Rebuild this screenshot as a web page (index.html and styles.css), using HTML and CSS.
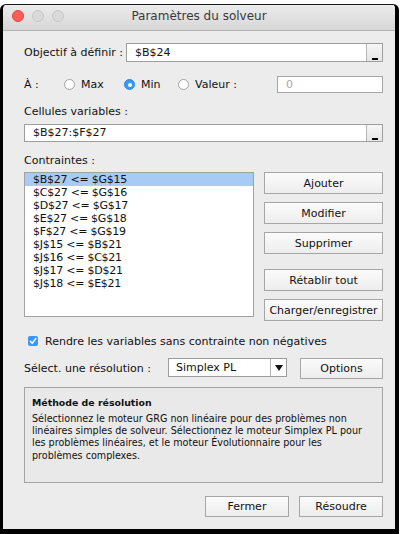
FILE: index.html
```html
<!DOCTYPE html>
<html lang="fr">
<head>
<meta charset="utf-8">
<title>Paramètres du solveur</title>
<link rel="stylesheet" href="styles.css">
</head>
<body>
<div class="window">
  <div class="titlebar">
    <div class="lights">
      <span class="light red"></span>
      <span class="light"></span>
      <span class="light"></span>
    </div>
    <div class="title">Paramètres du solveur</div>
    <div></div>
  </div>
  <div class="content">
    <div class="row obj">
      <div class="lbl obj-lbl">Objectif à définir :</div>
      <div class="refinput"><span class="reftext">$B$24</span><span class="refbtn"><span class="under"></span></span></div>
    </div>
    <div class="row to">
      <div class="lbl to-lbl">À :</div>
      <div class="opt opt-max"><span class="radio"></span><span>Max</span></div>
      <div class="opt opt-min"><span class="radio on"></span><span>Min</span></div>
      <div class="opt opt-val"><span class="radio"></span><span>Valeur :</span></div>
      <div class="valinput">0</div>
    </div>
    <div class="lbl section cells-lbl">Cellules variables :</div>
    <div class="refinput full"><span class="reftext">$B$27:$F$27</span><span class="refbtn"><span class="under"></span></span></div>
    <div class="lbl section cons-lbl">Contraintes :</div>
    <div class="constraints">
      <div class="listbox">
        <div class="item sel">$B$27 &lt;= $G$15</div>
        <div class="item">$C$27 &lt;= $G$16</div>
        <div class="item">$D$27 &lt;= $G$17</div>
        <div class="item">$E$27 &lt;= $G$18</div>
        <div class="item">$F$27 &lt;= $G$19</div>
        <div class="item">$J$15 &lt;= $B$21</div>
        <div class="item">$J$16 &lt;= $C$21</div>
        <div class="item">$J$17 &lt;= $D$21</div>
        <div class="item">$J$18 &lt;= $E$21</div>
      </div>
      <div class="btncol">
        <div class="btn">Ajouter</div>
        <div class="btn">Modifier</div>
        <div class="btn">Supprimer</div>
        <div class="btn gap">Rétablir tout</div>
        <div class="btn">Charger/enregistrer</div>
      </div>
    </div>
    <div class="row check">
      <span class="checkbox"><svg width="10" height="10" viewBox="0 0 10 10"><path d="M2.3 5.2 L4.2 7.3 L7.8 2.6" fill="none" stroke="#fff" stroke-width="1.5" stroke-linecap="round" stroke-linejoin="round"/></svg></span>
      <span>Rendre les variables sans contrainte non négatives</span>
    </div>
    <div class="row selrow">
      <div class="lbl sel-lbl">Sélect. une résolution :</div>
      <div class="select"><span class="seltext">Simplex PL</span><span class="arrow"><span class="tri"></span></span></div>
      <div class="btn opts">Options</div>
    </div>
    <div class="method">
      <div class="mtitle">Méthode de résolution</div>
      <div class="mtext">Sélectionnez le moteur GRG non linéaire pour des problèmes non<br>linéaires simples de solveur. Sélectionnez le moteur Simplex PL pour<br>les problèmes linéaires, et le moteur Évolutionnaire pour les<br>problèmes complexes.</div>
    </div>
    <div class="footer">
      <div class="btn foot">Fermer</div>
      <div class="btn foot">Résoudre</div>
    </div>
  </div>
</div>
</body>
</html>
```
FILE: styles.css
```css
* { box-sizing: border-box; }
html, body { margin: 0; padding: 0; }
body {
  background: #ffffff;
  font-family: "DejaVu Sans", "Noto Sans", sans-serif;
  font-size: 11px;
  color: #111;
  width: 402px;
  height: 534px;
  overflow: hidden;
}
.window {
  margin-top: 4px;
  width: 399px;
  height: 530px;
  border-left: 3px solid #000;
  border-right: 4px solid #000;
  border-bottom: 5px solid #000;
  border-top: 1px solid #1a1a1a;
  border-radius: 6px 6px 0 0;
  background: #ececec;
  overflow: hidden;
}
.titlebar {
  height: 26px;
  display: grid;
  grid-template-columns: 1fr auto 1fr;
  align-items: center;
  background: linear-gradient(#ececec, #d6d6d6);
  border-bottom: 1px solid #b3b3b3;
}
.lights {
  display: flex;
  gap: 8px;
  padding-left: 9px;
  padding-bottom: 3px;
}
.light {
  width: 12px;
  height: 12px;
  border-radius: 50%;
  background: #dadada;
  border: 1px solid #c6c6c6;
}
.light.red {
  background: #fc5f57;
  border-color: #e0443e;
}
.title {
  font-size: 12px;
  color: #3a3a3a;
  padding-bottom: 3px;
}
.content {
  padding: 12px 12px 0 21px;
}
.row {
  display: flex;
  align-items: center;
}
.lbl { line-height: 14px; white-space: nowrap; }
.obj { height: 19px; }
.obj-lbl { width: 102px; }
.refinput {
  flex: 1;
  height: 19px;
  background: #fff;
  border: 1px solid #9e9e9e;
  display: flex;
  align-items: stretch;
}
.refinput.full { height: 18px; margin-top: 5px; }
.reftext {
  flex: 1;
  padding-left: 8px;
  line-height: 17px;
}
.refinput.full .reftext { line-height: 16px; }
.refbtn {
  width: 16px;
  background: linear-gradient(#f6f6f6, #e6e6e6);
  border-left: 1px solid #b4b4b4;
  display: flex;
  justify-content: center;
  align-items: flex-end;
  padding-bottom: 1px;
}
.under {
  width: 6px;
  height: 2px;
  background: #000;
}
.to { height: 17px; margin-top: 14px; }
.to-lbl { width: 40px; }
.opt { display: flex; align-items: center; gap: 6px; }
.opt-max { width: 60px; }
.opt-min { width: 54px; }
.opt-val { flex: 1; }
.radio {
  width: 11px;
  height: 11px;
  border-radius: 50%;
  background: #fff;
  border: 1px solid #a2a2a2;
  display: inline-flex;
  align-items: center;
  justify-content: center;
}
.radio.on {
  background: #3a98fb;
  border-color: #2f86e6;
}
.radio.on::after {
  content: "";
  width: 4px;
  height: 4px;
  border-radius: 50%;
  background: #fff;
}
.valinput {
  width: 106px;
  height: 17px;
  background: #fff;
  border: 1px solid #a6a6a6;
  color: #a8a8a8;
  padding-left: 8px;
  line-height: 15px;
}
.cells-lbl { margin-top: 12px; }
.cons-lbl { margin-top: 12px; }
.constraints {
  display: flex;
  margin-top: 4px;
  gap: 10px;
  align-items: flex-start;
}
.listbox {
  width: 230px;
  height: 145px;
  background: #fff;
  border: 1px solid #a2a2a2;
  padding-top: 0;
  letter-spacing: -0.25px;
}
.item {
  height: 13px;
  line-height: 13px;
  padding-left: 8px;
}
.item.sel { background: #a8cbf6; }
.btncol {
  flex: 1;
  display: flex;
  flex-direction: column;
  gap: 8px;
}
.btn {
  height: 22px;
  border: 1px solid #a6a6a6;
  background: linear-gradient(#fbfbfb, #ededed);
  display: flex;
  align-items: center;
  justify-content: center;
  white-space: nowrap;
}
.btn.gap { margin-top: 7px; }
.check {
  margin-top: 13px;
  height: 14px;
  padding-left: 4px;
  gap: 7px;
}
.checkbox {
  width: 10px;
  height: 10px;
  border-radius: 2px;
  background: #3a98fb;
  display: inline-flex;
}
.selrow {
  margin-top: 10px;
  height: 21px;
  align-items: center;
}
.sel-lbl { width: 144px; }
.select {
  width: 119px;
  height: 19px;
  background: #fff;
  border: 1px solid #9c9c9c;
  display: flex;
  align-self: flex-start;
}
.seltext {
  flex: 1;
  padding-left: 7px;
  line-height: 17px;
}
.arrow {
  width: 16px;
  border-left: 1px solid #b0b0b0;
  display: flex;
  align-items: center;
  justify-content: center;
}
.tri {
  width: 0;
  height: 0;
  border-left: 4.5px solid transparent;
  border-right: 4.5px solid transparent;
  border-top: 6px solid #111;
}
.btn.opts {
  width: 83px;
  height: 21px;
  margin-left: auto;
}
.method {
  margin-top: 8px;
  height: 96px;
  border: 1px solid #a4a4a4;
  background: #e9e9e9;
  padding: 8px 7px 0 7px;
}
.mtitle {
  font-weight: bold;
  font-size: 9.4px;
  line-height: 14px;
}
.mtext {
  font-size: 9.6px;
  line-height: 12.2px;
  margin-top: 3px;
  white-space: nowrap;
}
.footer {
  margin-top: 13px;
  display: flex;
  justify-content: flex-end;
  gap: 10px;
}
.btn.foot { width: 84px; height: 21px; }
```
